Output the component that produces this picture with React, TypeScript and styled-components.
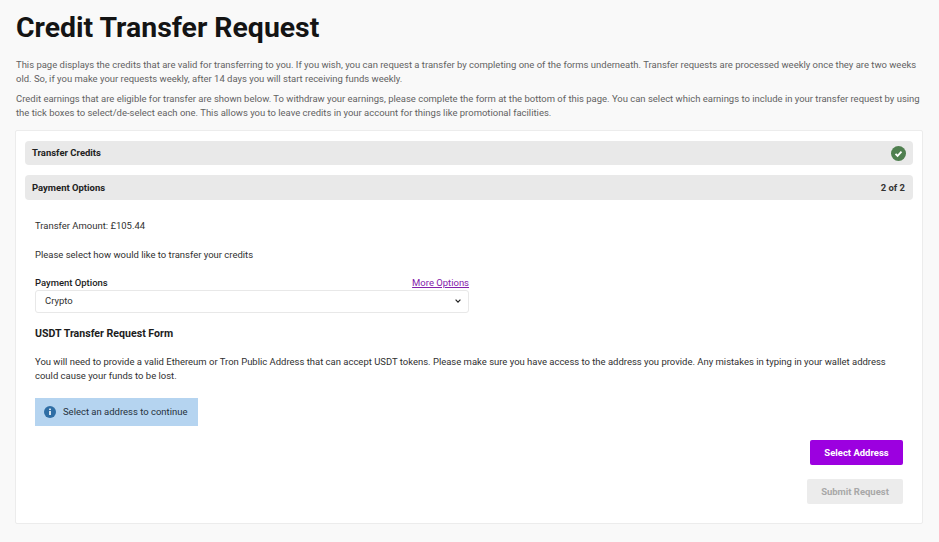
import React from 'react'
import styled, { createGlobalStyle } from 'styled-components'

const GlobalStyle = createGlobalStyle`
  html, body {
    margin: 0;
    padding: 0;
    background: #f9f9f9;
    font-family: Roboto, "Liberation Sans", sans-serif;
  }
`

const Page = styled.div`
  width: 939px;
  height: 542px;
  overflow: hidden;
  box-sizing: border-box;
  padding: 11px 16px 0 15px;
`

const Title = styled.h1`
  margin: 0 0 13px 1px;
  font-size: 28.4px;
  line-height: 34px;
  font-weight: 700;
  color: #141414;
`

const Intro = styled.p`
  margin: 0 0 6px 1px;
  font-size: 9.47px;
  line-height: 14px;
  color: #626262;
`

const Card = styled.div`
  margin-top: 10px;
  height: 394px;
  box-sizing: border-box;
  background: #fff;
  border: 1px solid #ececec;
  border-radius: 2px;
  padding: 10px 9px 0 9px;
`

const SectionBar = styled.div<{ $height: number }>`
  height: ${p => p.$height}px;
  margin-bottom: 10px;
  padding: 0 8px 1px 7px;
  box-sizing: border-box;
  display: flex;
  align-items: center;
  justify-content: space-between;
  background: #e9e9e9;
  border-radius: 4px;
  font-size: 9.47px;
  font-weight: 700;
  color: #222;
`

const BarStep = styled.span`
  color: #333;
`

const Body = styled.div`
  padding: 9px 10px 0 10px;
  font-size: 9.47px;
  color: #303030;
`

const Line = styled.div<{ $gap: number }>`
  line-height: 14px;
  margin-bottom: ${p => p.$gap}px;
`

const FieldHead = styled.div`
  width: 434px;
  display: flex;
  justify-content: space-between;
  line-height: 14px;
`

const FieldLabel = styled.span`
  font-weight: 500;
  color: #1c1c1c;
`

const MoreLink = styled.a`
  color: #8420ab;
  text-decoration: underline;
`

const Select = styled.div`
  width: 434px;
  height: 23px;
  box-sizing: border-box;
  display: flex;
  align-items: center;
  justify-content: space-between;
  padding: 0 7px 2px 9px;
  background: #fff;
  border: 1px solid #e8e8e8;
  border-radius: 3px;
`

const FormTitle = styled.h2`
  margin: 14px 0 14px 0;
  font-size: 10.6px;
  line-height: 14px;
  font-weight: 700;
  color: #1c1c1c;
`

const Notice = styled.div`
  width: 163px;
  height: 28px;
  margin-top: 15px;
  box-sizing: border-box;
  padding: 0 0 1px 9px;
  display: flex;
  align-items: center;
  gap: 7px;
  white-space: nowrap;
  background: #b5d4f0;
  color: #26323c;
`

const Actions = styled.div`
  display: flex;
  flex-direction: column;
  align-items: flex-end;
  gap: 14px;
  margin-top: 14px;
`

const Button = styled.div<{ $disabled?: boolean }>`
  height: 25px;
  box-sizing: border-box;
  padding-bottom: 1px;
  display: flex;
  align-items: center;
  justify-content: center;
  width: ${p => (p.$disabled ? 96 : 93)}px;
  border-radius: 2px;
  font-size: 9.47px;
  font-weight: 700;
  background: ${p => (p.$disabled ? '#ececec' : '#9c00e0')};
  color: ${p => (p.$disabled ? '#a8a8a8' : '#fff')};
`

const CheckIcon = () => (
  <svg width="15" height="15" viewBox="0 0 16 16" style={{ marginRight: -1, marginBottom: -1 }}>
    <circle cx="8" cy="8" r="8" fill="#4f7f4f" />
    <path d="M4.8 8.3l2.2 2.2 4.2-4.6" fill="none" stroke="#fff" strokeWidth="1.9" />
  </svg>
)

const Chevron = () => (
  <svg width="6" height="4" viewBox="0 0 6 4">
    <path d="M.6.7L3 3.1 5.4.7" fill="none" stroke="#222" strokeWidth="1.2" />
  </svg>
)

const InfoIcon = () => (
  <svg width="12" height="12" viewBox="0 0 12 12">
    <circle cx="6" cy="6" r="6" fill="#2f6ea5" />
    <rect x="5.2" y="5" width="1.6" height="4" fill="#fff" />
    <rect x="5.2" y="2.6" width="1.6" height="1.5" fill="#fff" />
  </svg>
)

export default function App() {
  return (
    <Page>
      <GlobalStyle />
      <Title>Credit Transfer Request</Title>
      <Intro>
        This page displays the credits that are valid for transferring to you. If you wish, you can request a transfer by completing one of the forms underneath. Transfer requests are processed weekly once they are two weeks old. So, if you make your requests weekly, after 14 days you will start receiving funds weekly.
      </Intro>
      <Intro>
        Credit earnings that are eligible for transfer are shown below. To withdraw your earnings, please complete the form at the bottom of this page. You can select which earnings to include in your transfer request by using the tick boxes to select/de-select each one. This allows you to leave credits in your account for things like promotional facilities.
      </Intro>
      <Card>
        <SectionBar $height={24}>
          Transfer Credits
          <CheckIcon />
        </SectionBar>
        <SectionBar $height={25}>
          Payment Options
          <BarStep>2 of 2</BarStep>
        </SectionBar>
        <Body>
          <Line $gap={15}>Transfer Amount: £105.44</Line>
          <Line $gap={14}>Please select how would like to transfer your credits</Line>
          <FieldHead>
            <FieldLabel>Payment Options</FieldLabel>
            <MoreLink>More Options</MoreLink>
          </FieldHead>
          <Select>
            Crypto
            <Chevron />
          </Select>
          <FormTitle>USDT Transfer Request Form</FormTitle>
          <Line $gap={0}>
            You will need to provide a valid Ethereum or Tron Public Address that can accept USDT tokens. Please make sure you have access to the address you provide. Any mistakes in typing in your wallet address could cause your funds to be lost.
          </Line>
          <Notice>
            <InfoIcon />
            Select an address to continue
          </Notice>
          <Actions>
            <Button>Select Address</Button>
            <Button $disabled>Submit Request</Button>
          </Actions>
        </Body>
      </Card>
    </Page>
  )
}
